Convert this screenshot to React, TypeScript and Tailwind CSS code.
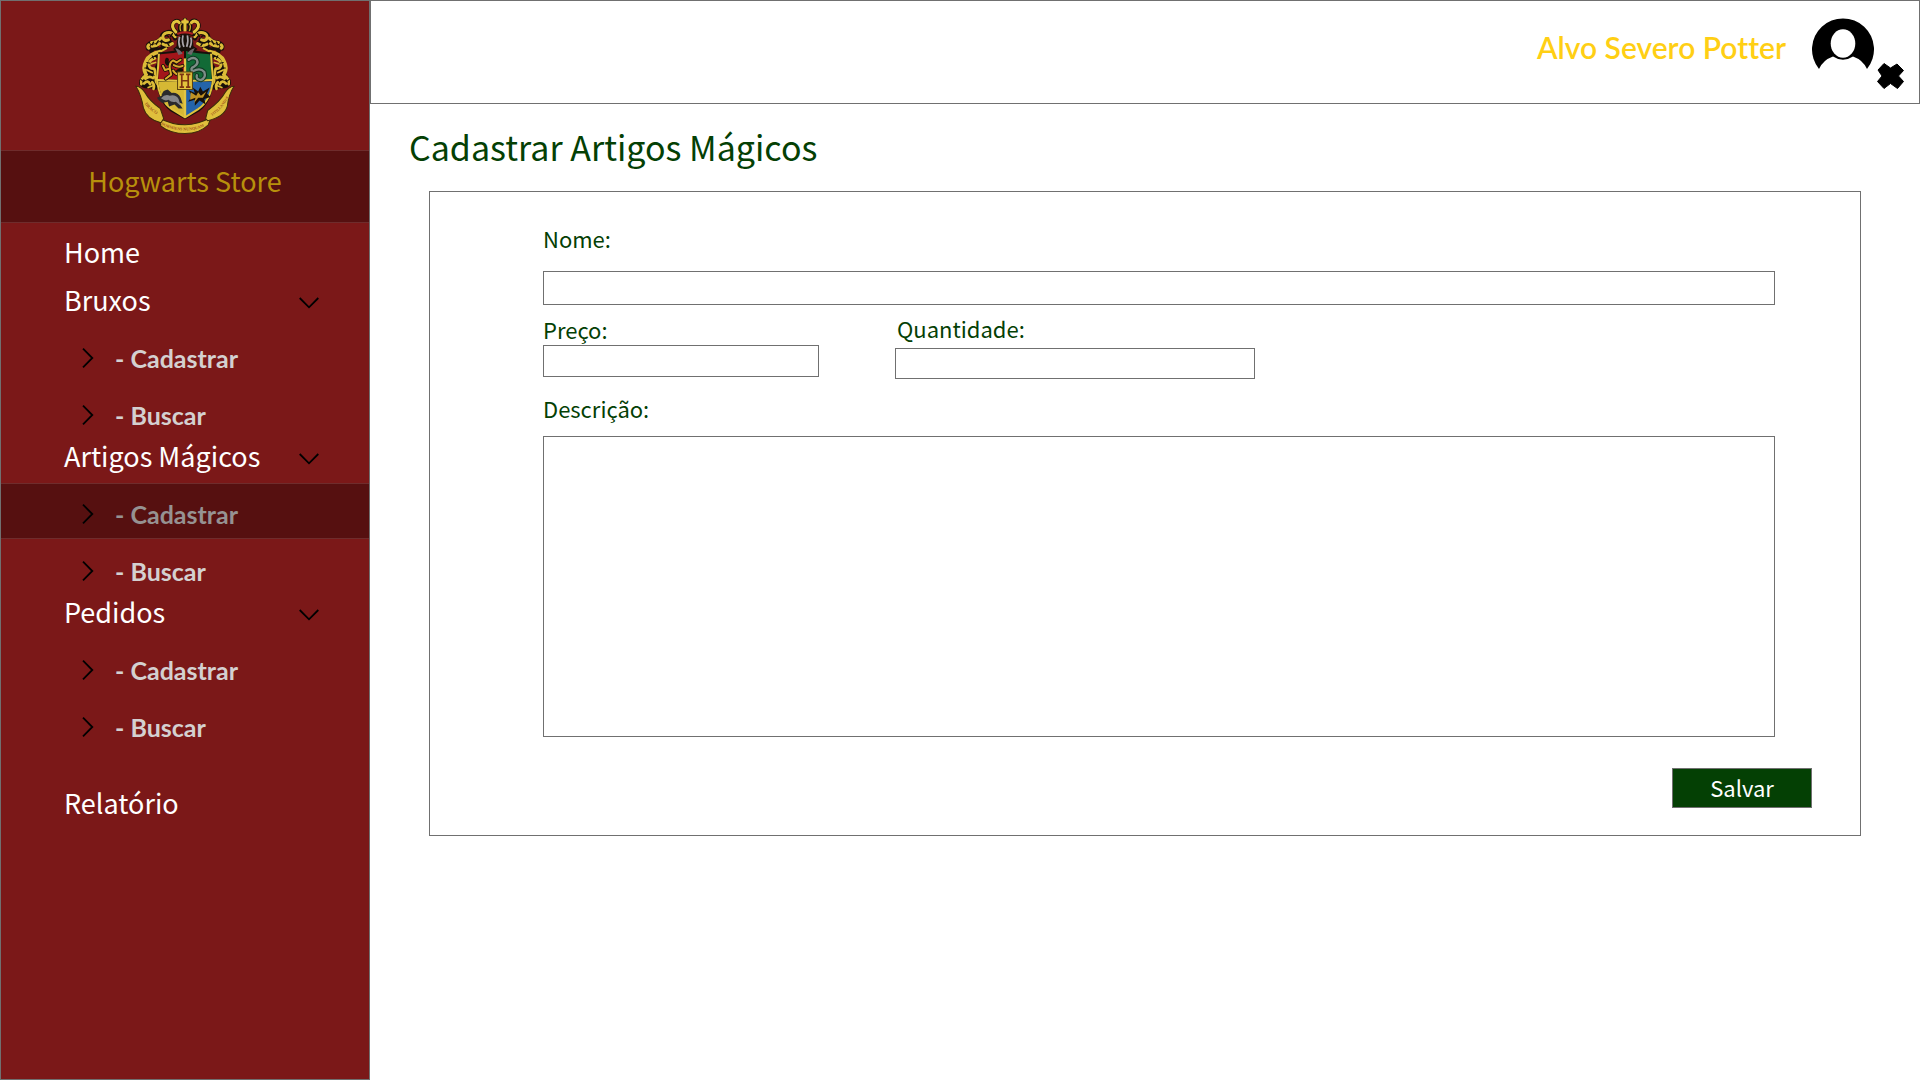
import React from "react";

const CJK = "font-['Noto_Sans_CJK_JP','Noto_Sans',sans-serif]";
const LATO = "font-['Lato',sans-serif]";

const K = "#17100a";
const G = "#dcbc38";

function CrestSide() {
  return (
    <g fill="none" strokeLinecap="round" strokeLinejoin="round">
      <g stroke={K} strokeWidth="14">
        <path d="M168 92 Q160 70 142 76 Q126 80 130 94 Q136 106 150 98" />
        <path d="M128 92 Q118 106 100 106 Q84 110 88 122 M124 106 Q140 116 156 108 M112 118 Q98 122 98 130 M140 118 L122 128" />
      </g>
      <path d="M150 100 Q146 116 120 128 Q112 132 108 126 Q130 118 134 104 Z" fill={K} />
      <g stroke={G} strokeWidth="9">
        <path d="M168 88 Q158 72 144 76 Q130 80 132 92 Q136 102 148 97" />
        <path d="M126 92 Q116 104 98 105 M122 108 Q112 116 100 116 M90 112 Q84 118 90 122 M132 110 Q146 118 160 108" />
        <path d="M142 122 L124 132" strokeWidth="6" />
      </g>
      <g stroke={K} strokeWidth="4">
        <path d="M138 86 Q144 82 148 88 M160 78 L154 88 M118 100 L112 110 M104 104 L100 112 M146 108 L150 114" />
      </g>

      <path d="M122 134 Q86 138 76 166 Q70 188 74 200 Q58 214 62 230 Q72 244 96 240 Q110 252 118 238 Q108 216 116 192 Q118 160 122 134 Z" fill={K} />
      <path d="M116 150 Q96 150 90 168 Q88 182 98 184 Q110 178 114 166 Z" fill="#7b1818" />
      <g stroke={G}>
        <path d="M124 132 Q92 138 82 160 Q72 180 80 196" strokeWidth="11" />
        <path d="M108 152 Q92 156 90 170 Q92 184 106 182 Q112 196 106 208" strokeWidth="8" />
        <path d="M84 200 Q64 212 68 228 M80 212 Q92 202 102 210 M76 226 Q88 214 94 228 M100 222 Q108 230 104 242 M112 206 Q108 220 116 228" strokeWidth="8" />
        <path d="M96 168 L110 164 M84 186 L100 194 M88 238 L104 232" strokeWidth="5" />
      </g>
      <g stroke={K} strokeWidth="3">
        <path d="M100 144 L104 152 M84 164 L94 166 M78 180 L86 180 M66 214 L74 220 M98 198 L106 202" />
      </g>
    </g>
  );
}

function Crest() {
  return (
    <svg viewBox="5 3 384 396" className="h-[134px] w-[130px]" role="img" aria-label="Hogwarts">
      <CrestSide />
      <g transform="translate(394 0) scale(-1 1)"><CrestSide /></g>

      <path d="M118 134 Q160 134 197 120 Q234 134 276 134 L282 200 Q282 276 240 308 L197 332 L154 308 Q112 276 112 200 Z" fill={K} />
      <path d="M124 140 Q162 138 194 130 V214 H118 Q118 170 124 140 Z" fill="#a3151a" />
      <path d="M200 130 Q232 138 270 140 Q276 176 276 214 H200 Z" fill="#126a36" />
      <path d="M118 220 H194 V322 Q126 296 118 220 Z" fill="#d6b834" />
      <path d="M200 220 H276 Q268 296 200 322 Z" fill="#2464aa" />
      <path d="M120 138 Q118 180 114 212 Q120 276 158 302 L197 326 L236 302 Q274 276 280 212 Q276 180 274 138" fill="none" stroke="#e0c23c" strokeWidth="6" />
      <path d="M197 152 V326" stroke="#e2c544" strokeWidth="7" />
      <path d="M114 216 L176 218 M218 218 L280 216" stroke="#e2c544" strokeWidth="6" />

      <g fill="none" strokeLinecap="round" strokeLinejoin="round">
        <path d="M140 212 L156 200 L152 182 L138 186 L132 174 M152 182 Q150 164 162 158 L172 164 L184 156 M164 172 Q178 180 190 174 M162 188 Q172 204 190 200 M144 156 Q140 166 150 170 M176 190 L186 186" stroke={K} strokeWidth="11" />
        <path d="M140 212 L156 200 L152 182 L138 186 L132 174 M152 182 Q150 164 162 158 L172 164 L184 156 M164 172 Q178 180 190 174 M162 188 Q172 204 190 200" stroke="#d8a82a" strokeWidth="6" />
        <path d="M208 156 Q222 146 232 156 Q238 168 224 176 Q210 182 220 190 Q242 178 254 192 Q260 210 244 216 Q228 214 232 202" stroke="#0f3a22" strokeWidth="13" />
        <path d="M208 156 Q222 146 232 156 Q238 168 224 176 Q210 182 220 190 Q242 178 254 192 Q260 210 244 216 Q228 214 232 202" stroke="#7d8d87" strokeWidth="7" />
      </g>

      <path d="M114 268 L128 262 Q130 246 146 244 L158 254 Q176 252 184 268 L190 286 L178 282 L190 300 L178 300 L166 288 L150 294 L146 280 L130 284 L120 276 Z" fill="#2a2a2c" />
      <path d="M126 270 Q138 256 152 262 Q170 258 178 272 L184 292 L170 280 Q158 284 148 274 Q138 280 126 270 Z" fill="#85868a" />
      <path d="M208 246 L226 254 L220 238 L236 250 L242 236 L250 250 L270 238 L262 256 L272 266 L254 272 L258 288 L240 276 L226 292 L226 274 L206 280 L218 264 Z" fill={K} />
      <path d="M214 252 L230 262 L236 252 L244 262 L260 250 L250 268 L236 268 L224 284 L228 268 L212 274 Z" fill="#bf9224" />

      <path d="M175 192 H219 V244 H175 Z" fill="#e2c23c" stroke="#5a4210" strokeWidth="3" />
      <path d="M181 199 H194 M181 237 H194 M187.500 199 V237 M200 199 H213 M200 237 H213 M206.500 199 V237 M187 218 H207" fill="none" stroke="#7d3412" strokeWidth="5" />

      <path d="M172 116 Q170 84 197 80 Q224 84 222 116 L234 124 Q216 144 197 126 Q178 144 162 124 Z" fill={K} />
      <path d="M181 88 Q176 104 182 120 M191 84 Q187 104 194 118 M204 84 Q208 102 202 118 M214 90 Q219 104 211 120" fill="none" stroke="#aaa5aa" strokeWidth="5" />
      <path d="M168 122 Q184 126 190 138 L178 142 Z M226 122 Q210 126 204 138 L216 142 Z" fill="#6d666b" />
      <g fill="none" strokeLinecap="round" strokeLinejoin="round">
        <path d="M170 74 Q154 58 164 46 Q174 36 182 46 M184 72 Q180 56 188 48 M224 74 Q244 58 234 46 Q224 36 214 46 M210 72 Q216 56 208 48 M197 70 V38 M172 80 Q197 70 222 80" stroke={K} strokeWidth="13" />
        <path d="M170 74 Q154 58 164 46 Q174 38 180 46 M224 74 Q244 58 234 46 Q224 38 216 46 M197 70 V38 M190 44 H204" stroke="#e3c43c" strokeWidth="9" />
        <path d="M184 70 Q180 56 186 50 M210 70 Q216 56 210 50" stroke="#c9a62c" strokeWidth="4" />
        <path d="M176 79 Q197 71 218 79" stroke="#b02020" strokeWidth="6" />
      </g>

      <g fill="#dfbf3c" stroke="#3c2c0a" strokeWidth="3">
        <path d="M120 328 Q158 348 197 348 Q236 348 274 326 L266 348 Q240 374 197 374 Q154 374 126 352 Z" />
        <path d="M52 234 Q66 234 78 252 Q92 278 124 300 L134 330 L126 342 Q84 332 74 298 Q68 260 52 234 Z" />
        <path d="M342 234 Q328 234 316 252 Q302 278 264 306 L258 330 L264 336 Q312 326 322 294 Q326 258 342 234 Z" />
      </g>
      <path id="motto-left" d="M78 286 Q92 308 126 324" fill="none" />
      <path id="motto-mid" d="M126 347 Q160 365 197 365 Q236 365 270 344" fill="none" />
      <path id="motto-right" d="M276 322 Q312 300 334 252" fill="none" />
      <g fill="#a3571c" fontFamily="Liberation Serif, serif" fontWeight="700" fontSize="13">
        <text><textPath href="#motto-left">DRACO</textPath></text>
        <text fontSize="12"><textPath href="#motto-mid">DORMIENS NUNQUAM</textPath></text>
        <text fontSize="11"><textPath href="#motto-right">TITILLANDUS</textPath></text>
      </g>
    </svg>
  );
}

function ChevronDown() {
  return (
    <svg viewBox="0 0 20 12" className="mt-1.5 h-3 w-5" fill="none" stroke="#000" strokeWidth="1.8" aria-hidden="true">
      <path d="M.7 1 L10 10.3 L19.3 1" />
    </svg>
  );
}

function ChevronRight() {
  return (
    <svg viewBox="0 0 12 20" className="h-5 w-3" fill="none" stroke="#000" strokeWidth="1.8" aria-hidden="true">
      <path d="M1 .7 L10.3 10 L1 19.3" />
    </svg>
  );
}

function Group({ title, active }: { title: string; active?: string }) {
  return (
    <li className="h-[156px]">
      <button type="button" className="flex h-10 w-full items-center justify-between pr-[50px] pl-[63px] text-[27px] leading-10 text-white">
        {title}
        <ChevronDown />
      </button>
      <ul className="mt-[7px] flex flex-col gap-px">
        {["Cadastrar", "Buscar"].map((item) => {
          const on = item === active;
          return (
            <li key={item} className={on ? "border-y border-[#6f2c2c] bg-[#561010]" : "border-y border-transparent"}>
              <a href="#" className={`flex h-[54px] items-center gap-[21px] pt-1.5 pl-[81px] ${on ? "text-[#969292]" : "text-[#d4d0d0]"}`}>
                <ChevronRight />
                <span className={`${LATO} text-[25px] leading-8 font-bold`}>- {item}</span>
              </a>
            </li>
          );
        })}
      </ul>
    </li>
  );
}

const box = "block border border-[#707070] bg-white px-2 text-xl text-[#044004] outline-none";
const label = "block text-[22px] leading-[30px]";

export default function App() {
  return (
    <div className={`flex min-h-screen bg-white ${CJK}`}>
      <aside className="w-[370px] shrink-0 border border-[#707070] bg-[#7b1818]">
        <div className="flex h-[149px] justify-center pt-[7px]">
          <Crest />
        </div>
        <div className="h-[73px] border-y border-[#6f2c2c] bg-[#561010] pt-2.5 text-center text-[27px] leading-10 text-[#b8900c]">
          Hogwarts Store
        </div>
        <nav className="pt-[9px]">
          <ul>
            <li className="mb-2">
              <a href="#" className="block pl-[63px] text-[27px] leading-10 text-white">Home</a>
            </li>
            <Group title="Bruxos" />
            <Group title="Artigos Mágicos" active="Cadastrar" />
            <Group title="Pedidos" />
            <li className="mt-[35px]">
              <a href="#" className="block pl-[63px] text-[27px] leading-10 text-white">Relatório</a>
            </li>
          </ul>
        </nav>
      </aside>

      <div className="min-w-0 flex-1">
        <header className="flex h-[104px] items-start justify-end border border-[#707070] pr-[15px]">
          <span className={`${LATO} mt-[23px] mr-[26px] text-[30px] leading-[46px] font-semibold text-[#ffcf14] [font-variant-ligatures:none]`}>Alvo Severo Potter</span>
          <svg viewBox="0 0 62 52" className="mt-[17px] h-[52px] w-[62px]" role="img" aria-label="Perfil">
            <path d="M7 51 A31 31 0 1 1 55 51 Q51 42 41 38.500 Q31 45 21 38.500 Q11 42 7 51 Z" fill="#000" />
            <ellipse cx="31" cy="25.500" rx="12.300" ry="14.300" fill="#fff" />
          </svg>
          <button type="button" aria-label="Sair" className="mt-[62px] ml-[3px]">
            <svg viewBox="0 0 27 26" className="h-[26px] w-[27px]" aria-hidden="true">
              <path d="M7 .5 L13.500 5 L20 1 L26.500 7.500 L21.500 13 L26.500 18.500 L20.500 25.500 L13.500 20.500 L7 25.500 L.5 18.500 L5 13 L1 7 Z" fill="#000" stroke="#000" strokeLinejoin="round" />
            </svg>
          </button>
        </header>

        <main className="pt-[18px] text-[#044004]">
          <h1 className="pl-[39px] text-[34px] leading-[50px]">Cadastrar Artigos Mágicos</h1>
          <form className="mx-[59px] mt-[19px] border border-[#707070] pt-[31px] pb-[27px]">
            <div className="pr-[85px] pl-[113px]">
              <label htmlFor="nome" className={label}>Nome:</label>
              <input id="nome" className={`${box} mt-[18px] h-[34px] w-full`} />
              <div className="mt-2 flex gap-[76px]">
                <div className="pt-px">
                  <label htmlFor="preco" className={label}>Preço:</label>
                  <input id="preco" className={`${box} mt-px h-8 w-[276px]`} />
                </div>
                <div>
                  <label htmlFor="quantidade" className={`${label} pl-0.5`}>Quantidade:</label>
                  <input id="quantidade" className={`${box} mt-[5px] h-[31px] w-[360px]`} />
                </div>
              </div>
              <label htmlFor="descricao" className={`${label} mt-3.5`}>Descrição:</label>
              <textarea id="descricao" className={`${box} mt-[13px] h-[301px] w-full resize-none`} />
            </div>
            <div className="mt-[31px] flex justify-end pr-12">
              <button type="button" className="h-10 w-[140px] border border-[#707070] bg-[#044004] pb-0.5 text-[22px] leading-8 text-white">Salvar</button>
            </div>
          </form>
        </main>
      </div>
    </div>
  );
}
